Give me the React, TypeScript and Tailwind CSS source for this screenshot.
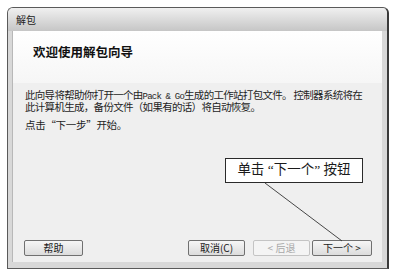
import React from "react";

const cjk = { fontFamily: '"Noto Sans CJK SC", "Liberation Sans", sans-serif' };
const serif = { fontFamily: '"Liberation Serif", "Noto Sans CJK SC", serif' };

function WinButton({ label, disabled, width }: { label: React.ReactNode; disabled?: boolean; width: string }) {
  return (
    <button
      type="button"
      className={`flex h-[16px] ${width} items-center justify-center rounded-[2px] border text-[10px] leading-none ${
        disabled
          ? "border-[#c4c4c4] bg-[#f4f4f4] text-[#a8a8a8]"
          : "border-[#707070] bg-gradient-to-b from-[#f6f6f6] to-[#dcdcdc] text-[#1a1a1a]"
      }`}
    >
      {label}
    </button>
  );
}

export default function App() {
  return (
    <div className="relative h-[276px] w-[401px] overflow-hidden bg-white" style={cjk}>
      <div className="ml-[7px] mt-[7px] flex h-[262px] w-[382px] flex-col rounded-t-[6px] border border-[#5a5a5a] border-r-[2px] border-r-[#3a3a3a] bg-[#d8d8d8]">
        {/* title bar */}
        <div className="flex h-[23px] items-center rounded-t-[5px] bg-gradient-to-b from-[#f0f0f0] to-[#c6c6c6] pl-[8px] text-[10px] text-[#222]">
          解包
        </div>
        {/* client area */}
        <div className="flex flex-1 flex-col pb-[6px] pl-[4px] pr-[5px]">
          <div className="flex flex-1 flex-col border-l border-[#b8b8b8] bg-[#efefef]">
            <div className="h-[52px] bg-gradient-to-b from-[#ffffff] to-[#f6f6f6] pl-[20px] pt-[12px] text-[12.5px] font-bold leading-[18px] text-[#111]">
              欢迎使用解包向导
            </div>
            <div className="flex flex-1 flex-col pl-[12px] pt-[7px] text-[10.5px] text-[#1e1e1e]">
              <p className="m-0 whitespace-nowrap leading-[10px] tracking-[-0.7px]">
                此向导将帮助你打开一个由
                <span className="text-[9px] tracking-[-0.8px]" style={{ fontFamily: '"Liberation Mono", monospace' }}>
                  Pack &amp; Go
                </span>
                生成的工作站打包文件。 控制器系统将在
                <br />
                此计算机生成，备份文件（如果有的话）将自动恢复。
              </p>
              <p className="m-0 mt-[8px] leading-[10px] tracking-[-0.3px]">点击“下一步”开始。</p>
            </div>
            <div className="flex items-center pb-[6px] pl-[11px] pr-[10px]">
              <WinButton label="帮助" width="w-[59px]" />
              <div className="ml-auto flex gap-[8px]">
                <WinButton label="取消(C)" width="w-[57px]" />
                <WinButton label="< 后退" disabled width="w-[57px]" />
              </div>
              <div className="ml-[2px]">
                <WinButton label="下一个 >" width="w-[60px]" />
              </div>
            </div>
          </div>
        </div>
      </div>

      {/* callout */}
      <div
        className="absolute left-[225px] top-[158px] flex h-[25px] w-[138px] items-center justify-center border-[1.5px] border-[#2a2a2a] bg-white text-[13.5px] text-[#1a1a1a]"
        style={serif}
      >
        单击 “下一个” 按钮
      </div>
      <svg className="absolute left-0 top-0" width="401" height="276">
        <line x1="265" y1="183" x2="342" y2="241" stroke="#333" strokeWidth="0.9" />
      </svg>
    </div>
  );
}
